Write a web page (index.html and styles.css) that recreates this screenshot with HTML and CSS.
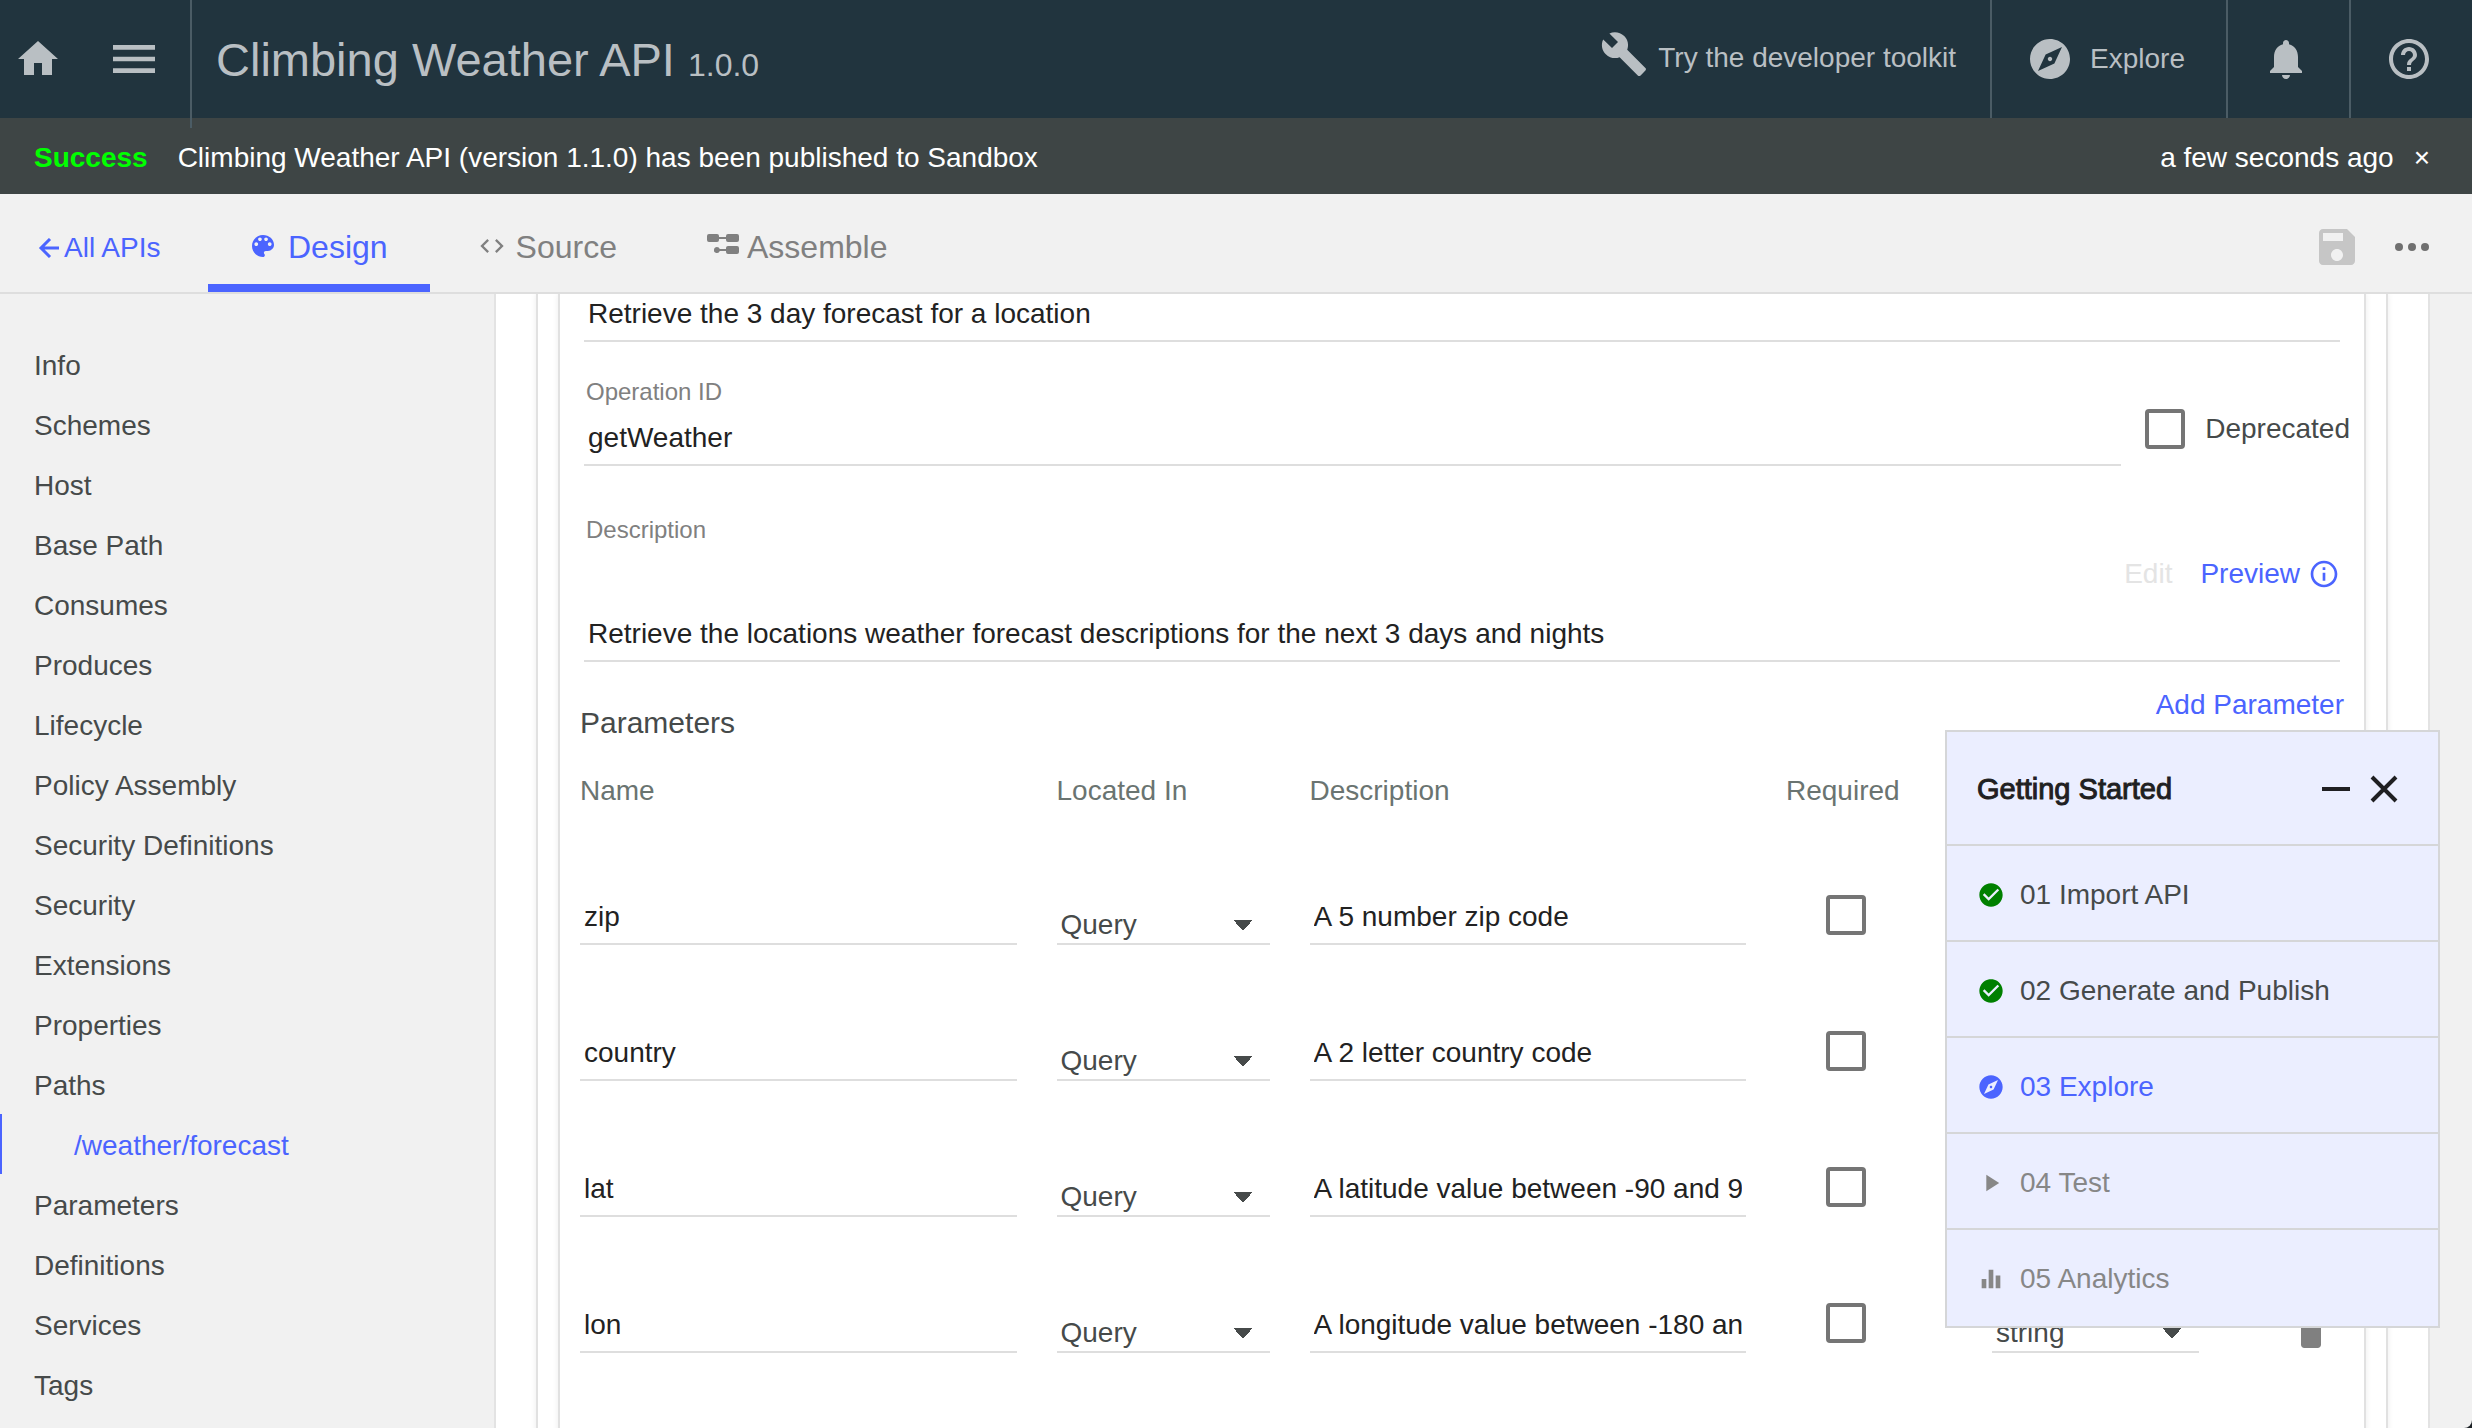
FILE: index.html
```html
<!DOCTYPE html>
<html lang="en">
<head>
<meta charset="utf-8">
<title>Climbing Weather API</title>
<link rel="stylesheet" href="styles.css">
</head>
<body>
<svg class="sprite" aria-hidden="true">
  <symbol id="explore" viewBox="0 0 24 24"><path d="M12 10.9c-.61 0-1.1.49-1.1 1.1s.49 1.1 1.1 1.1c.61 0 1.1-.49 1.1-1.1s-.49-1.1-1.1-1.1zM12 2C6.48 2 2 6.48 2 12s4.48 10 10 10 10-4.48 10-10S17.52 2 12 2zm2.19 12.19L6 18l3.81-8.19L18 6l-3.81 8.19z"/></symbol>
  <symbol id="check" viewBox="0 0 24 24"><path d="M12 2C6.48 2 2 6.48 2 12s4.48 10 10 10 10-4.48 10-10S17.52 2 12 2zm-2 15l-5-5 1.41-1.41L10 14.17l7.59-7.59L19 8l-9 9z"/></symbol>
  <symbol id="delete" viewBox="0 0 24 24"><path d="M6 19c0 1.1.9 2 2 2h8c1.1 0 2-.9 2-2V7H6v12zM19 4h-3.5l-1-1h-5l-1 1H5v2h14V4z"/></symbol>
</svg>
<div class="app">
  <header class="topbar">
    <a class="icon-link" href="#" aria-label="Home"><svg class="icon" viewBox="0 0 24 24"><path d="M10 20v-6h4v6h5v-8h3L12 3 2 12h3v8z"/></svg></a>
    <button class="menu-button" aria-label="Menu"><svg class="icon-menu" viewBox="0 0 24 24"><path d="M3 18h18v-2H3v2zm0-5h18v-2H3v2zm0-7v2h18V6H3z"/></svg></button>
    <h1 class="title">Climbing Weather API <small class="version">1.0.0</small></h1>
    <a class="toolkit" href="#"><svg class="icon toolkit-icon" viewBox="0 0 24 24"><path d="M22.7 19l-9.1-9.1c.9-2.3.4-5-1.5-6.9-2-2-5-2.4-7.4-1.3L9 6 6 9 1.6 4.7C.4 7.1.9 10.1 2.9 12.1c1.9 1.9 4.6 2.4 6.9 1.5l9.1 9.1c.4.4 1 .4 1.4 0l2.3-2.3c.5-.4.5-1.1.1-1.4z"/></svg>Try the developer toolkit</a>
    <a class="top-item explore" href="#"><svg class="icon"><use href="#explore"/></svg>Explore</a>
    <button class="top-item" aria-label="Notifications"><svg class="icon" viewBox="0 0 24 24"><path d="M12 22c1.1 0 2-.9 2-2h-4c0 1.1.89 2 2 2zm6-6v-5c0-3.07-1.64-5.64-4.5-6.32V4c0-.83-.67-1.5-1.5-1.5s-1.5.67-1.5 1.5v.68C7.63 5.36 6 7.92 6 11v5l-2 2v1h16v-1l-2-2z"/></svg></button>
    <button class="top-item" aria-label="Help"><svg class="icon" viewBox="0 0 24 24"><path d="M11 18h2v-2h-2v2zm1-16C6.48 2 2 6.48 2 12s4.48 10 10 10 10-4.48 10-10S17.52 2 12 2zm0 18c-4.41 0-8-3.59-8-8s3.59-8 8-8 8 3.59 8 8-3.59 8-8 8zm0-14c-2.21 0-4 1.79-4 4h2c0-1.1.9-2 2-2s2 .9 2 2c0 2-3 1.75-3 5h2c0-2.25 3-2.5 3-5 0-2.21-1.79-4-4-4z"/></svg></button>
  </header>

  <div class="notice" role="status">
    <strong class="notice-kind">Success</strong>
    <span class="notice-text">Climbing Weather API (version 1.1.0) has been published to Sandbox</span>
    <span>a few seconds ago</span>
    <button class="notice-close" aria-label="Dismiss">×</button>
  </div>

  <nav class="tabs">
    <a class="back" href="#"><svg class="icon-back" viewBox="0 0 20 20"><path d="M20 10H2M11 1L2 10l9 9"/></svg>All APIs</a>
    <a class="tab active" href="#"><svg class="icon-palette" viewBox="3 3 18 18"><path d="M12 3c-4.97 0-9 4.03-9 9s4.03 9 9 9c.83 0 1.5-.67 1.5-1.5 0-.39-.15-.74-.39-1.01-.23-.26-.38-.61-.38-.99 0-.83.67-1.5 1.5-1.5H16c2.76 0 5-2.24 5-5 0-4.42-4.03-8-9-8zm-5.5 9c-.83 0-1.5-.67-1.5-1.5S5.67 9 6.5 9 8 9.67 8 10.5 7.33 12 6.5 12zm3-4C8.67 8 8 7.33 8 6.5S8.67 5 9.5 5s1.5.67 1.5 1.5S10.33 8 9.5 8zm5 0c-.83 0-1.5-.67-1.5-1.5S13.67 5 14.5 5s1.5.67 1.5 1.5S15.33 8 14.5 8zm3 4c-.83 0-1.5-.67-1.5-1.5S16.67 9 17.5 9s1.5.67 1.5 1.5-.67 1.5-1.5 1.5z"/></svg>Design</a>
    <a class="tab" href="#"><svg class="icon-code" viewBox="2 6 20 12"><path d="M9.4 16.6L4.8 12l4.6-4.6L8 6l-6 6 6 6 1.4-1.4zm5.2 0l4.6-4.6-4.6-4.6L16 6l6 6-6 6-1.4-1.4z"/></svg>Source</a>
    <a class="tab" href="#"><svg class="icon-flow" viewBox="0 0 32 20"><path d="M2 0h8a2 2 0 0 1 2 2v1h7V2a2 2 0 0 1 2-2h9a2 2 0 0 1 2 2v4a2 2 0 0 1-2 2h-9a2 2 0 0 1-2-2V5h-7v1a2 2 0 0 1-2 2H2a2 2 0 0 1-2-2V2a2 2 0 0 1 2-2zM10 13a3 3 0 0 1 2.8 2H19v-1a2 2 0 0 1 2-2h9a2 2 0 0 1 2 2v4a2 2 0 0 1-2 2h-9a2 2 0 0 1-2-2v-1h-6.2A3 3 0 1 1 10 13z"/></svg>Assemble</a>
    <div class="tab-actions">
      <button class="save" aria-label="Save" disabled><svg class="icon" viewBox="0 0 24 24"><path d="M17 3H5c-1.11 0-2 .9-2 2v14c0 1.1.89 2 2 2h14c1.1 0 2-.9 2-2V7l-4-4zm-5 16c-1.66 0-3-1.34-3-3s1.34-3 3-3 3 1.34 3 3-1.34 3-3 3zm3-10H5V5h10v4z"/></svg></button>
      <button class="more" aria-label="More"><svg class="icon-more" viewBox="0 0 34 8"><circle cx="4" cy="4" r="4"/><circle cx="17" cy="4" r="4"/><circle cx="30" cy="4" r="4"/></svg></button>
    </div>
  </nav>

  <div class="body">
    <nav class="sidebar">
      <a href="#">Info</a>
      <a href="#">Schemes</a>
      <a href="#">Host</a>
      <a href="#">Base Path</a>
      <a href="#">Consumes</a>
      <a href="#">Produces</a>
      <a href="#">Lifecycle</a>
      <a href="#">Policy Assembly</a>
      <a href="#">Security Definitions</a>
      <a href="#">Security</a>
      <a href="#">Extensions</a>
      <a href="#">Properties</a>
      <a href="#">Paths</a>
      <a class="current" href="#">/weather/forecast</a>
      <a href="#">Parameters</a>
      <a href="#">Definitions</a>
      <a href="#">Services</a>
      <a href="#">Tags</a>
    </nav>

    <main class="content">
      <section class="path-card">
        <article class="operation-card">
          <form class="fields">
            <input class="text-input" type="text" aria-label="Summary" value="Retrieve the 3 day forecast for a location">
            <div class="operation-row">
              <div class="field">
                <label class="label" for="operation-id">Operation ID</label>
                <input class="text-input" id="operation-id" type="text" value="getWeather">
              </div>
              <label class="check-label"><input class="checkbox" type="checkbox">Deprecated</label>
            </div>
            <div class="description-field">
              <label class="label" for="description">Description</label>
              <div class="description-modes">
                <button type="button" class="mode" disabled>Edit</button>
                <button type="button" class="mode">Preview</button>
                <svg class="icon-info" viewBox="0 0 24 24"><path d="M11 17h2v-6h-2v6zm1-15C6.48 2 2 6.48 2 12s4.48 10 10 10 10-4.48 10-10S17.52 2 12 2zm0 18c-4.41 0-8-3.59-8-8s3.59-8 8-8 8 3.59 8 8-3.59 8-8 8zM11 9h2V7h-2v2z"/></svg>
              </div>
              <input class="text-input" id="description" type="text" value="Retrieve the locations weather forecast descriptions for the next 3 days and nights">
            </div>
          </form>

          <section class="parameters">
            <header class="parameters-head">
              <h2 class="parameters-title">Parameters</h2>
              <button class="add">Add Parameter</button>
            </header>
            <table class="param-table">
              <colgroup><col><col class="col-in"><col><col class="col-required"><col class="col-type"><col class="col-delete"></colgroup>
              <thead>
                <tr><th>Name</th><th>Located In</th><th>Description</th><th>Required</th><th aria-label="Type"></th><th></th></tr>
              </thead>
              <tbody>
                <tr>
                  <td><input class="text-input" type="text" aria-label="Name" value="zip"></td>
                  <td><select class="select" aria-label="Located in"><option>Query</option></select></td>
                  <td><input class="text-input" type="text" aria-label="Description" value="A 5 number zip code"></td>
                  <td class="cell-check"><input class="checkbox" type="checkbox" aria-label="Required"></td>
                  <td><select class="select" aria-label="Type"><option>string</option></select></td>
                  <td class="cell-delete"><button class="delete" aria-label="Delete"><svg class="icon-delete"><use href="#delete"/></svg></button></td>
                </tr>
                <tr>
                  <td><input class="text-input" type="text" aria-label="Name" value="country"></td>
                  <td><select class="select" aria-label="Located in"><option>Query</option></select></td>
                  <td><input class="text-input" type="text" aria-label="Description" value="A 2 letter country code"></td>
                  <td class="cell-check"><input class="checkbox" type="checkbox" aria-label="Required"></td>
                  <td><select class="select" aria-label="Type"><option>string</option></select></td>
                  <td class="cell-delete"><button class="delete" aria-label="Delete"><svg class="icon-delete"><use href="#delete"/></svg></button></td>
                </tr>
                <tr>
                  <td><input class="text-input" type="text" aria-label="Name" value="lat"></td>
                  <td><select class="select" aria-label="Located in"><option>Query</option></select></td>
                  <td><input class="text-input" type="text" aria-label="Description" value="A latitude value between -90 and 90"></td>
                  <td class="cell-check"><input class="checkbox" type="checkbox" aria-label="Required"></td>
                  <td><select class="select" aria-label="Type"><option>string</option></select></td>
                  <td class="cell-delete"><button class="delete" aria-label="Delete"><svg class="icon-delete"><use href="#delete"/></svg></button></td>
                </tr>
                <tr>
                  <td><input class="text-input" type="text" aria-label="Name" value="lon"></td>
                  <td><select class="select" aria-label="Located in"><option>Query</option></select></td>
                  <td><input class="text-input" type="text" aria-label="Description" value="A longitude value between -180 and 180"></td>
                  <td class="cell-check"><input class="checkbox" type="checkbox" aria-label="Required"></td>
                  <td><select class="select" aria-label="Type"><option>string</option></select></td>
                  <td class="cell-delete"><button class="delete" aria-label="Delete"><svg class="icon-delete"><use href="#delete"/></svg></button></td>
                </tr>
              </tbody>
            </table>
          </section>
        </article>
      </section>
    </main>
  </div>

  <aside class="guide">
    <header class="guide-head">
      <h2 class="guide-title">Getting Started</h2>
      <button class="guide-button" aria-label="Minimize"><svg class="icon-guide" viewBox="0 0 28 28"><path d="M0 14h28"/></svg></button>
      <button class="guide-button" aria-label="Close"><svg class="icon-guide" viewBox="0 0 28 28"><path d="M2 2l24 24M26 2L2 26"/></svg></button>
    </header>
    <a class="step done" href="#"><svg class="icon-step"><use href="#check"/></svg>01 Import API</a>
    <a class="step done" href="#"><svg class="icon-step"><use href="#check"/></svg>02 Generate and Publish</a>
    <a class="step now" href="#"><svg class="icon-step"><use href="#explore"/></svg>03 Explore</a>
    <a class="step" href="#"><svg class="icon-step" viewBox="0 0 24 24"><path d="M8 5v14l11-7z"/></svg>04 Test</a>
    <a class="step" href="#"><svg class="icon-step" viewBox="0 0 24 24"><path d="M10 20h4V4h-4v16zm-6 0h4v-8H4v8zM16 9v11h4V9h-4z"/></svg>05 Analytics</a>
  </aside>
</div>
</body>
</html>
```

FILE: styles.css
```css
* {
  box-sizing: border-box;
}

html {
  background: #1c2226;
}

body {
  margin: 0;
  font: 28px/32px "Liberation Sans", Arial, sans-serif;
  color: #464a4a;
}

a {
  color: inherit;
  text-decoration: none;
}

button,
input,
select {
  margin: 0;
  padding: 0;
  border: 0;
  background: none;
  font: inherit;
  color: inherit;
}

h1,
h2 {
  margin: 0;
  font-weight: normal;
}

svg {
  display: block;
  flex: none;
  fill: currentColor;
}

.sprite {
  display: none;
}

.app {
  display: flex;
  flex-direction: column;
  height: 100vh;
  overflow: hidden;
  background: #f1f1f1;
  border-bottom-right-radius: 8px;
}

.icon {
  width: 48px;
  height: 48px;
}

/* Top bar */
.topbar {
  display: flex;
  align-items: center;
  height: 118px;
  flex: none;
  background: #21343e;
  color: #b9bfc3;
}

.icon-link {
  margin-left: 14px;
}

.menu-button {
  margin: 0 28px 0 44px;
}

.icon-menu {
  width: 56px;
  height: 56px;
}

.title {
  position: relative;
  z-index: 1;
  flex: 1;
  align-self: flex-start;
  height: 128px;
  padding-left: 24px;
  border-left: 2px solid #4b5c65;
  font-size: 47px;
  line-height: 120px;
  white-space: nowrap;
}

.version {
  font-size: 32px;
}

.toolkit {
  display: flex;
  align-items: center;
  gap: 10px;
  margin: 0 34px 2px 0;
}

.toolkit-icon {
  margin-bottom: 8px;
}

.top-item {
  display: flex;
  align-items: center;
  align-self: stretch;
  padding: 0 39px 0 34px;
  border-left: 2px solid #4b5c65;
}

.explore {
  gap: 16px;
  padding-right: 41px;
}

/* Notification bar */
.notice {
  display: flex;
  align-items: center;
  height: 76px;
  flex: none;
  padding: 4px 42px 0 34px;
  background: #3e4545;
  color: #fff;
}

.notice-kind {
  margin-right: 30px;
  color: #00ff00;
}

.notice-text {
  flex: 1;
}

.notice-close {
  margin-left: 20px;
}

/* Tabs */
.tabs {
  display: flex;
  height: 100px;
  flex: none;
  border-bottom: 2px solid #dedede;
  font-size: 32px;
  color: #808080;
}

.back {
  display: flex;
  align-items: center;
  gap: 4px;
  width: 208px;
  padding: 10px 0 0 38px;
  font-size: 28px;
  color: #4b64ff;
}

.tab {
  display: flex;
  align-items: center;
  padding: 16px 42px 0;
  border-bottom: 8px solid transparent;
}

.tab.active {
  border-bottom-color: #4b64ff;
  color: #4b64ff;
}

.tab + .tab {
  margin-left: 6px;
}

.icon-back {
  width: 22px;
  height: 20px;
  fill: none;
  stroke: currentColor;
  stroke-width: 3;
}

.icon-palette {
  width: 22px;
  height: 22px;
  margin: 0 14px 2px 2px;
}

.icon-code {
  width: 24px;
  height: 14px;
  margin: 0 12px 2px 2px;
}

.icon-flow {
  width: 32px;
  height: 20px;
  margin: 0 8px 6px 0;
}

.tab-actions {
  display: flex;
  align-items: center;
  gap: 34px;
  margin-left: auto;
  padding: 8px 43px 0 0;
}

.save {
  color: #c6c6c6;
}

.more {
  color: #707070;
}

.icon-more {
  width: 34px;
  height: 8px;
}

/* Body */
.body {
  display: flex;
  flex: 1;
  min-height: 0;
}

.sidebar {
  width: 496px;
  flex: none;
  padding-top: 40px;
  border-right: 2px solid #e3e3e3;
  overflow: hidden;
}

.sidebar a {
  display: block;
  padding: 4px 0 0 34px;
  line-height: 56px;
}

.sidebar .current {
  padding-left: 72px;
  border-left: 2px solid #4b64ff;
  color: #4b64ff;
}

.content {
  flex: 1;
  min-width: 0;
  margin-right: 42px;
  padding: 0 40px;
  border-right: 2px solid #e3e3e3;
  background: #fff;
  overflow: hidden;
}

.path-card,
.operation-card {
  min-height: 100%;
  border: solid #e1e1e1;
  border-width: 0 2px;
  box-shadow: 0 0 6px rgba(0, 0, 0, 0.08);
}

.path-card {
  display: flex;
  padding: 0 20px;
}

.operation-card {
  flex: 1;
  min-width: 0;
  padding-bottom: 80px;
}

.fields {
  padding: 0 24px;
}

.text-input {
  display: block;
  width: 100%;
  height: 48px;
  padding: 0 4px 6px;
  border-bottom: 2px solid #dedede;
  color: #222;
}

.label {
  display: block;
  font-size: 24px;
  line-height: 28px;
  color: #808080;
}

.operation-row {
  display: flex;
  gap: 24px;
  margin: 36px -10px 0 0;
}

.field {
  flex: 1;
}

.field .label {
  margin-bottom: 12px;
}

.label,
.mode {
  padding: 0 2px;
}

.check-label {
  display: flex;
  align-items: center;
  gap: 20px;
  padding-top: 14px;
}

.checkbox {
  appearance: none;
  width: 40px;
  height: 40px;
  border: 4px solid #757575;
  border-radius: 4px;
}

.description-field {
  margin-top: 50px;
}

.description-modes {
  display: flex;
  align-items: center;
  justify-content: flex-end;
  margin: 14px 0 24px;
  color: #4b64ff;
}

.mode:disabled {
  margin-right: 24px;
  color: #e4e4e4;
}

.icon-info {
  width: 32px;
  height: 32px;
  margin-left: 6px;
}

/* Parameters */
.parameters {
  margin-top: 27px;
  padding: 0 20px;
}

.parameters-head {
  display: flex;
  align-items: flex-end;
  justify-content: space-between;
  height: 52px;
}

.parameters-title {
  font-size: 30px;
  line-height: 36px;
}

.add {
  align-self: flex-start;
  color: #4b64ff;
}

.param-table {
  width: 100%;
  table-layout: fixed;
  border-collapse: collapse;
}

.col-in {
  width: 253px;
}

.col-required {
  width: 206px;
}

.col-type {
  width: 247px;
}

.col-delete {
  width: 105px;
}

.param-table th {
  padding: 34px 0 2px;
  font-weight: normal;
  text-align: left;
  color: #6a7471;
}

.param-table td {
  height: 136px;
  padding: 0 40px 0 0;
  vertical-align: bottom;
}

.param-table .cell-check {
  padding: 0 0 10px 40px;
}

.param-table .cell-check .checkbox,
.delete {
  display: block;
}

.param-table .cell-delete {
  padding: 0 0 0 52px;
}

.select {
  display: block;
  appearance: none;
  width: 100%;
  height: 38px;
  padding: 0 4px;
  border-bottom: 2px solid #dedede;
  border-radius: 0;
  background: conic-gradient(from -41deg at 50% 100%, #464a4a 82deg, transparent 0) no-repeat right 17px center / 20px 11px;
}

.icon-delete {
  width: 40px;
  height: 40px;
  color: #808080;
}

/* Getting started guide */
.guide {
  position: fixed;
  right: 32px;
  bottom: 100px;
  z-index: 2;
  width: 495px;
  padding-bottom: 2px;
  border: 2px solid #d5d6d8;
  background: #ebeeff;
}

.guide-head {
  display: flex;
  align-items: center;
  height: 112px;
  padding: 2px 40px 0 30px;
  color: #1f1f22;
}

.guide-title {
  flex: 1;
  font-size: 29px;
  -webkit-text-stroke: 1px;
}

.guide-button + .guide-button {
  margin-left: 20px;
}

.icon-guide {
  width: 28px;
  height: 28px;
  fill: none;
  stroke: currentColor;
  stroke-width: 4;
}

.step {
  display: flex;
  align-items: center;
  gap: 15px;
  height: 96px;
  padding: 4px 0 0 30px;
  border-top: 2px solid #d5d6d8;
  color: #878787;
}

.icon-step {
  width: 28px;
  height: 28px;
}

.step.done {
  color: #464a4a;
}

.done .icon-step {
  color: #008000;
}

.step.now {
  color: #4b64ff;
}
```
